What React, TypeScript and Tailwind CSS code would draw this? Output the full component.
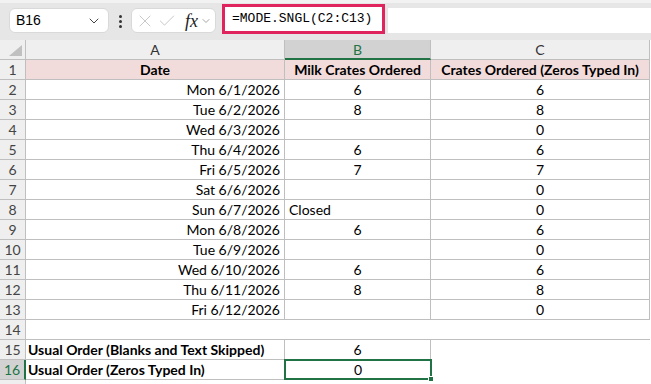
import { X, Check, ChevronDown } from 'lucide-react';

const rows: [string, string, string, 'c' | 'l'][] = [
  ['Mon 6/1/2026', '6', '6', 'c'],
  ['Tue 6/2/2026', '8', '8', 'c'],
  ['Wed 6/3/2026', '', '0', 'c'],
  ['Thu 6/4/2026', '6', '6', 'c'],
  ['Fri 6/5/2026', '7', '7', 'c'],
  ['Sat 6/6/2026', '', '0', 'c'],
  ['Sun 6/7/2026', 'Closed', '0', 'l'],
  ['Mon 6/8/2026', '6', '6', 'c'],
  ['Tue 6/9/2026', '', '0', 'c'],
  ['Wed 6/10/2026', '6', '6', 'c'],
  ['Thu 6/11/2026', '8', '8', 'c'],
  ['Fri 6/12/2026', '', '0', 'c'],
];

const cell = 'h-5 border-r border-b border-[#bfbfbf] px-1 flex items-center whitespace-nowrap overflow-hidden';
const rowHead = 'h-5 border-r border-b border-[#bfbfbf] bg-[#efefef] flex items-center justify-center text-[#444]';

export default function App() {
  return (
    <div className="w-[651px] h-[384px] overflow-hidden bg-white text-[14px] text-black" style={{ fontFamily: 'Lato, "Liberation Sans", sans-serif' }}>
      {/* formula bar */}
      <div className="h-10 bg-[#e6e6e6] border-t-[3px] border-[#f2f2f2] flex items-start">
        <div className="mt-[5px] ml-[9px] w-[100px] h-[25px] bg-white rounded-md border border-[#d9d9d9] flex items-center justify-between pl-[6px] pr-[6px] text-[14px]" style={{ fontFamily: '"Liberation Sans", sans-serif' }}>
          <span>B16</span>
          <ChevronDown className="w-4 h-4 text-[#444]" strokeWidth={1.5} />
        </div>
        <div className="mt-[12px] w-[22px] flex flex-col items-center gap-[2px]">
          <span className="w-[3px] h-[3px] bg-[#333] rounded-full" />
          <span className="w-[3px] h-[3px] bg-[#333] rounded-full" />
          <span className="w-[3px] h-[3px] bg-[#333] rounded-full" />
        </div>
        <div className="mt-[5px] w-[85px] h-[25px] bg-white rounded-md border border-[#d9d9d9] flex items-center pl-[3px] gap-[2px]">
          <X className="w-5 h-5 text-[#c4c4c4]" strokeWidth={1.1} />
          <Check className="w-5 h-5 text-[#c4c4c4]" strokeWidth={1.1} />
          <span className="ml-[6px] italic text-[18px] leading-none text-[#222]" style={{ fontFamily: '"Liberation Serif", serif' }}>fx</span>
          <ChevronDown className="w-3 h-3 text-[#888]" strokeWidth={1.5} />
        </div>
        <div className="mt-[1px] ml-[6px] w-[163px] h-[30px] bg-white border-[3px] border-[#e0245e] flex items-center pl-[7px] text-[13px]" style={{ fontFamily: '"Liberation Mono", monospace' }}>
          =MODE.SNGL(C2:C13)
        </div>
        <div className="mt-[5px] flex-1 h-[25px] bg-white ml-[3px]" />
      </div>

      {/* grid */}
      <div className="grid grid-cols-[26px_259px_146px_219px]">
        {/* column headers */}
        <div className="h-5 border-r border-b border-[#bfbfbf] bg-[#efefef] relative">
          <div className="absolute right-[3px] bottom-[3px] w-0 h-0 border-l-[13px] border-l-transparent border-b-[11px] border-b-[#c0c0c0]" />
        </div>
        <div className="h-5 border-r border-b border-[#bfbfbf] bg-[#efefef] flex items-center justify-center text-[#333]">A</div>
        <div className="h-5 border-r border-b-2 border-r-[#bfbfbf] border-b-[#217346] bg-[#d2d2d2] flex items-center justify-center text-[#217346]">B</div>
        <div className="h-5 border-r border-b border-[#bfbfbf] bg-[#efefef] flex items-center justify-center text-[#333]">C</div>

        {/* row 1 */}
        <div className={rowHead}>1</div>
        <div className={`${cell} justify-center font-bold bg-[#f2dcdb]`}>Date</div>
        <div className={`${cell} justify-center font-bold bg-[#f2dcdb]`}>Milk Crates Ordered</div>
        <div className={`${cell} justify-center font-bold bg-[#f2dcdb]`}>Crates Ordered (Zeros Typed In)</div>

        {rows.map((r, i) => (
          <>
            <div key={`h${i}`} className={rowHead}>{i + 2}</div>
            <div key={`a${i}`} className={`${cell} justify-end`}>{r[0]}</div>
            <div key={`b${i}`} className={`${cell} ${r[3] === 'c' ? 'justify-center' : 'justify-start'}`}>{r[1]}</div>
            <div key={`c${i}`} className={`${cell} justify-center`}>{r[2]}</div>
          </>
        ))}

        {/* row 14 */}
        <div className={rowHead}>14</div>
        <div className="h-5 col-span-3 border-b border-[#bfbfbf]" />

        {/* row 15 */}
        <div className={rowHead}>15</div>
        <div className="h-5 border-r border-b border-[#bfbfbf] px-[2px] flex items-center font-bold whitespace-nowrap">Usual Order (Blanks and Text Skipped)</div>
        <div className={`${cell} justify-center`}>6</div>
        <div className="h-5" />

        {/* row 16 */}
        <div className="h-5 border-r-2 border-b border-r-[#217346] border-b-[#bfbfbf] bg-[#d2d2d2] flex items-center justify-center text-[#217346]">16</div>
        <div className="h-5 border-r border-b border-[#bfbfbf] px-[2px] flex items-center font-bold whitespace-nowrap">Usual Order (Zeros Typed In)</div>
        <div className="h-5 relative flex items-center justify-center border-b border-[#bfbfbf]">
          <div className="absolute -left-px -top-px -right-px -bottom-px border-2 border-[#217346]" />
          <div className="absolute -right-[3px] -bottom-[3px] w-[6px] h-[6px] bg-[#217346] border border-white" />
          0
        </div>
        <div className="h-5" />

        {/* row 17 stub */}
        <div className="h-5 border-r border-[#bfbfbf] bg-[#efefef]" />
      </div>
    </div>
  );
}
